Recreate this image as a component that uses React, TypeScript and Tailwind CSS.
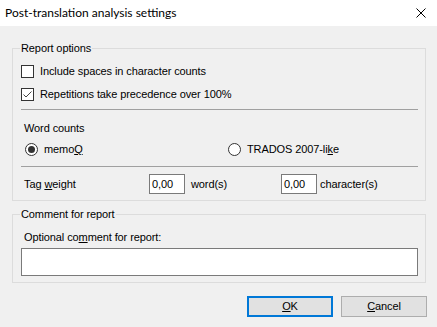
function CheckBox({ checked, label }: { checked?: boolean; label: string }) {
  return (
    <div className="flex h-[23px] items-center">
      <span className="flex h-[13px] w-[13px] items-center justify-center border border-[#333333] bg-white">
        {checked && (
          <svg width="11" height="11" viewBox="0 0 11 11">
            <path d="M1.5 5.5 L4 8 L9.5 2.5" fill="none" stroke="#444444" strokeWidth="1" />
          </svg>
        )}
      </span>
      <span className="ml-[6px]">{label}</span>
    </div>
  )
}

function Radio({ checked, children }: { checked?: boolean; children: React.ReactNode }) {
  return (
    <div className="flex items-center">
      <span className="flex h-[13px] w-[13px] items-center justify-center rounded-full border border-[#333333] bg-white">
        {checked && <span className="h-[7px] w-[7px] rounded-full bg-[#333333]" />}
      </span>
      <span className="ml-[6px]">{children}</span>
    </div>
  )
}

function NumBox({ value }: { value: string }) {
  return (
    <div className="flex h-[20px] w-[36px] items-center border border-[#7a7a7a] bg-white pl-[2px]">{value}</div>
  )
}

export default function App() {
  return (
    <div className="flex h-[327px] w-[437px] flex-col bg-[#f0f0f0] font-['Liberation_Sans',sans-serif] text-[11px] tracking-[-0.1px] text-black">
      <div className="flex h-[26px] shrink-0 items-center justify-between bg-white pl-[5px] pr-[11px] font-['Lato',sans-serif] text-[12px] tracking-normal">
        <span>Post-translation analysis settings</span>
        <svg width="10" height="10" viewBox="0 0 10 10">
          <path d="M0.5 0.5 L9.5 9.5 M9.5 0.5 L0.5 9.5" stroke="#000" strokeWidth="1" />
        </svg>
      </div>

      <div className="flex flex-col px-[12px] pt-[14px]">
        <fieldset className="h-[161px] w-[414px] border border-[#dcdcdc] pl-[8px] pr-[7px]">
          <legend className="ml-[-1px] h-[16px] px-[1px] leading-[16px]">Report options</legend>
          <div className="pt-[4px]">
            <CheckBox label="Include spaces in character counts" />
            <CheckBox checked label="Repetitions take precedence over 100%" />
          </div>
          <div className="mt-[3px] h-px bg-[#a0a0a0]" />
          <div className="pl-[3px]">
            <div className="mt-[10px] leading-[16px]">Word counts</div>
            <div className="mt-[5px] flex h-[16px] items-center pl-[1px]">
              <div className="w-[203px]">
                <Radio checked>
                  memo<span className="underline">Q</span>
                </Radio>
              </div>
              <Radio>
                TRADOS 2007-li<span className="underline">k</span>e
              </Radio>
            </div>
          </div>
          <div className="mt-[9px] h-px bg-[#a0a0a0]" />
          <div className="mt-[7px] flex h-[20px] items-center pl-[3px]">
            <span className="w-[125px]">
              Tag <span className="underline">w</span>eight
            </span>
            <NumBox value="0,00" />
            <span className="ml-[6px] w-[90px]">word(s)</span>
            <NumBox value="0,00" />
            <span className="ml-[3px]">character(s)</span>
          </div>
        </fieldset>

        <fieldset className="mt-[5px] h-[77px] w-[414px] border border-[#dcdcdc] pl-[8px] pr-[7px]">
          <legend className="ml-[-1px] h-[16px] px-[1px] leading-[16px]">Comment for report</legend>
          <div className="mt-[7px] pl-[3px] leading-[16px]">
            Optional co<span className="underline">m</span>ment for report:
          </div>
          <div className="mt-[3px] h-[28px] border border-[#7a7a7a] bg-white" />
        </fieldset>

        <div className="mt-[13px] flex justify-end gap-[8px]">
          <button className="flex h-[21px] w-[86px] items-center justify-center border-2 border-[#0078d7] bg-[#e1e1e1]">
            <span className="underline">O</span>K
          </button>
          <button className="mr-[-2px] flex h-[21px] w-[86px] items-center justify-center border border-[#adadad] bg-[#e1e1e1]">
            <span className="underline">C</span>ancel
          </button>
        </div>
      </div>
    </div>
  )
}
